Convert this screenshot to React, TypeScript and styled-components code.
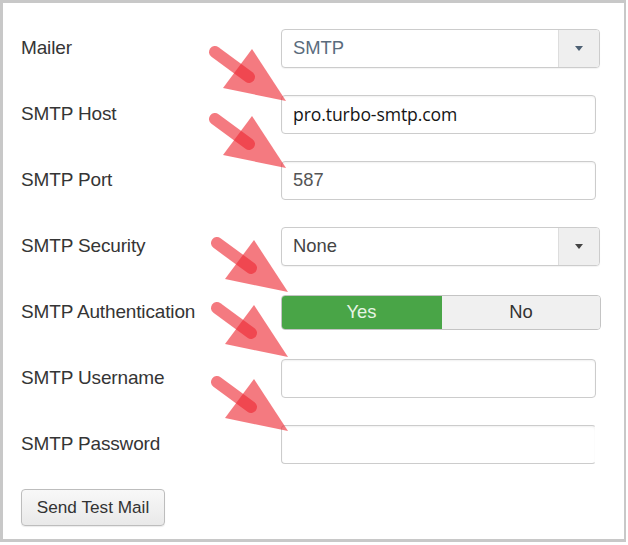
import React from "react";
import styled, { createGlobalStyle } from "styled-components";

const Global = createGlobalStyle`
  html, body { margin: 0; padding: 0; background: #ffffff; }
  body { font-family: "Liberation Sans", Arial, sans-serif; }
  * { box-sizing: border-box; }
`;

const Frame = styled.div`
  position: relative;
  width: 626px;
  height: 542px;
  border-style: solid;
  border-color: #c8c8c8;
  border-width: 3px 2px 3px 3px;
  background: #ffffff;
  padding: 12px 0 0 18px;
  display: flex;
  flex-direction: column;
`;

const Row = styled.div`
  display: grid;
  grid-template-columns: 260px 1fr;
  align-items: center;
  height: 66px;
`;

const Label = styled.div`
  font-size: 19px;
  color: #353535;
  letter-spacing: -0.15px;
`;

const Input = styled.div<{ $open?: boolean }>`
  width: 315px;
  height: 39px;
  border: 1px solid #cccccc;
  ${(p) => (p.$open ? "border-right-color: transparent;" : "")}
  border-radius: 4px;
  background: #ffffff;
  box-shadow: inset 0 1px 2px rgba(0, 0, 0, 0.06);
  display: flex;
  align-items: center;
  padding-left: 11px;
  font-size: 18.4px;
  color: #555555;
`;

const HostValue = styled.span`
  font-family: "Open Sans", "Noto Sans", sans-serif;
  font-size: 17.6px;
  color: #151515;
  letter-spacing: -0.1px;
`;

const Select = styled.div`
  width: 319px;
  height: 39px;
  border: 1px solid #cccccc;
  border-radius: 4px;
  background: #ffffff;
  box-shadow: 0 1px 1px rgba(0, 0, 0, 0.05);
  display: flex;
  overflow: hidden;
`;

const SelectValue = styled.div<{ $tone: string }>`
  flex: 1;
  display: flex;
  align-items: center;
  padding-left: 11px;
  font-size: 18.4px;
  color: ${(p) => p.$tone};
`;

const Caret = styled.div<{ $tone: string }>`
  width: 41px;
  border-left: 1px solid #dddddd;
  background: #efefef;
  display: flex;
  align-items: center;
  justify-content: center;
  &::after {
    content: "";
    width: 0;
    height: 0;
    border-left: 4.5px solid transparent;
    border-right: 4.5px solid transparent;
    border-top: 5px solid ${(p) => p.$tone};
  }
`;

const Toggle = styled.div`
  width: 320px;
  height: 35px;
  display: grid;
  grid-template-columns: 160px 1fr;
  border-radius: 4px;
  overflow: hidden;
  border: 1px solid #c4c4c4;
`;

const ToggleOption = styled.div<{ $active?: boolean }>`
  display: flex;
  align-items: center;
  justify-content: center;
  font-size: 18.4px;
  background: ${(p) => (p.$active ? "#49a547" : "#f0f0f0")};
  color: ${(p) => (p.$active ? "#e6f4e4" : "#333333")};
  ${(p) => (p.$active ? "margin: -1px 0 -1px -1px;" : "")}
`;

const ButtonRow = styled.div`
  margin-top: 12px;
`;

const Button = styled.button`
  width: 144px;
  height: 37px;
  border: 1px solid #bdbdbd;
  border-radius: 4px;
  background: linear-gradient(#f8f8f8, #e9e9e9);
  font-family: "Liberation Sans", Arial, sans-serif;
  font-size: 17.2px;
  color: #333333;
  padding: 0;
  box-shadow: 0 1px 1px rgba(0, 0, 0, 0.08);
`;

const Overlay = styled.svg`
  position: absolute;
  left: -3px;
  top: -3px;
  pointer-events: none;
`;

const arrows = [
  { x: 0, y: 0 },
  { x: 0, y: 67 },
  { x: 2, y: 191 },
  { x: 2, y: 256 },
  { x: 2, y: 330 },
];

function Arrow({ x, y }: { x: number; y: number }) {
  return (
    <g transform={`translate(${x} ${y})`}>
      <line
        x1={215}
        y1={52}
        x2={249}
        y2={77}
        stroke="rgb(238,40,50)"
        strokeOpacity={0.62}
        strokeWidth={12}
        strokeLinecap="round"
      />
      <polygon
        points="252,49 223,88 286,101"
        fill="rgb(238,40,50)"
        fillOpacity={0.62}
      />
    </g>
  );
}

export default function App() {
  return (
    <>
      <Global />
      <Frame>
        <Row>
          <Label>Mailer</Label>
          <Select>
            <SelectValue $tone="#5a6c7d">SMTP</SelectValue>
            <Caret $tone="#4d6073" />
          </Select>
        </Row>
        <Row>
          <Label>SMTP Host</Label>
          <Input>
            <HostValue>pro.turbo-smtp.com</HostValue>
          </Input>
        </Row>
        <Row>
          <Label>SMTP Port</Label>
          <Input>587</Input>
        </Row>
        <Row>
          <Label>SMTP Security</Label>
          <Select>
            <SelectValue $tone="#444444">None</SelectValue>
            <Caret $tone="#444444" />
          </Select>
        </Row>
        <Row>
          <Label>SMTP Authentication</Label>
          <Toggle>
            <ToggleOption $active>Yes</ToggleOption>
            <ToggleOption>No</ToggleOption>
          </Toggle>
        </Row>
        <Row>
          <Label>SMTP Username</Label>
          <Input />
        </Row>
        <Row>
          <Label>SMTP Password</Label>
          <Input $open />
        </Row>
        <ButtonRow>
          <Button>Send Test Mail</Button>
        </ButtonRow>
        <Overlay width={628} height={545} viewBox="0 0 628 545">
          {arrows.map((a, i) => (
            <Arrow key={i} x={a.x} y={a.y} />
          ))}
        </Overlay>
      </Frame>
    </>
  );
}
